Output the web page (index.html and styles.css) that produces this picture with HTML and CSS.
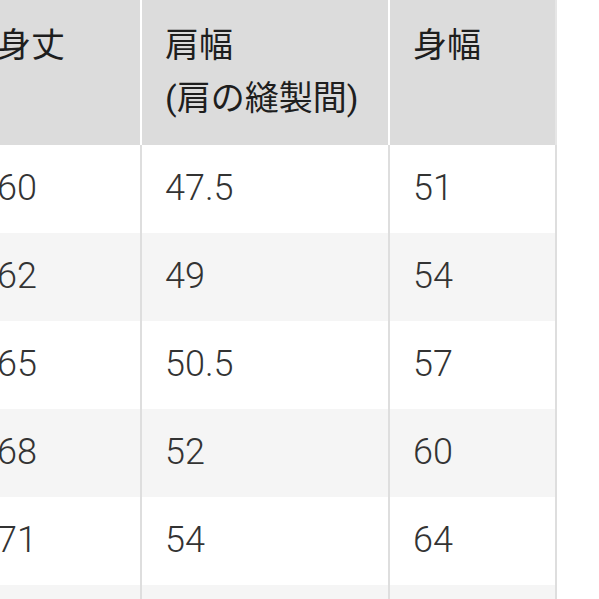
FILE: index.html
```html
<!DOCTYPE html>
<html lang="ja">
<head>
<meta charset="utf-8">
<title>サイズ表</title>
<link rel="stylesheet" href="styles.css">
</head>
<body>
<table class="size-table">
  <thead>
    <tr class="head-row">
      <th class="c1">身丈</th>
      <th class="c2">肩幅<br>(肩の縫製間)</th>
      <th class="c3">身幅</th>
    </tr>
  </thead>
  <tbody>
    <tr class="row"><td>60</td><td>47.5</td><td>51</td></tr>
    <tr class="row alt"><td>62</td><td>49</td><td>54</td></tr>
    <tr class="row"><td>65</td><td>50.5</td><td>57</td></tr>
    <tr class="row alt"><td>68</td><td>52</td><td>60</td></tr>
    <tr class="row"><td>71</td><td>54</td><td>64</td></tr>
    <tr class="row alt"><td>74</td><td>55.5</td><td>67</td></tr>
  </tbody>
</table>
</body>
</html>
```
FILE: styles.css
```css
html, body {
  margin: 0;
  padding: 0;
  background: #ffffff;
}
body {
  overflow: hidden;
  font-family: Roboto, "Noto Sans CJK JP", sans-serif;
}
.size-table {
  margin-left: -26px;
  border-collapse: separate;
  border-spacing: 0;
  table-layout: fixed;
  width: 583px;
}
.size-table th,
.size-table td {
  box-sizing: border-box;
  text-align: left;
  padding: 0 0 0 23px;
  line-height: 53px;
}
.size-table .c1 { width: 168px; }
.size-table .c2 { width: 248px; }
.size-table .c3 { width: 167px; }
.head-row th {
  height: 145px;
  vertical-align: top;
  padding-top: 19px;
  background: #dcdcdc;
  border-right: 2px solid #ffffff;
  font-size: 34px;
  font-weight: 400;
  color: #1e1e1e;
}
.head-row th.c3 {
  border-right: 2px solid #e6e6e6;
}
.row td {
  height: 88px;
  vertical-align: middle;
  padding-bottom: 2px;
  background: #ffffff;
  border-right: 2px solid #dedede;
  font-size: 36px;
  font-weight: 300;
  color: #333333;
}
.row.alt td {
  background: #f5f5f5;
}
```
